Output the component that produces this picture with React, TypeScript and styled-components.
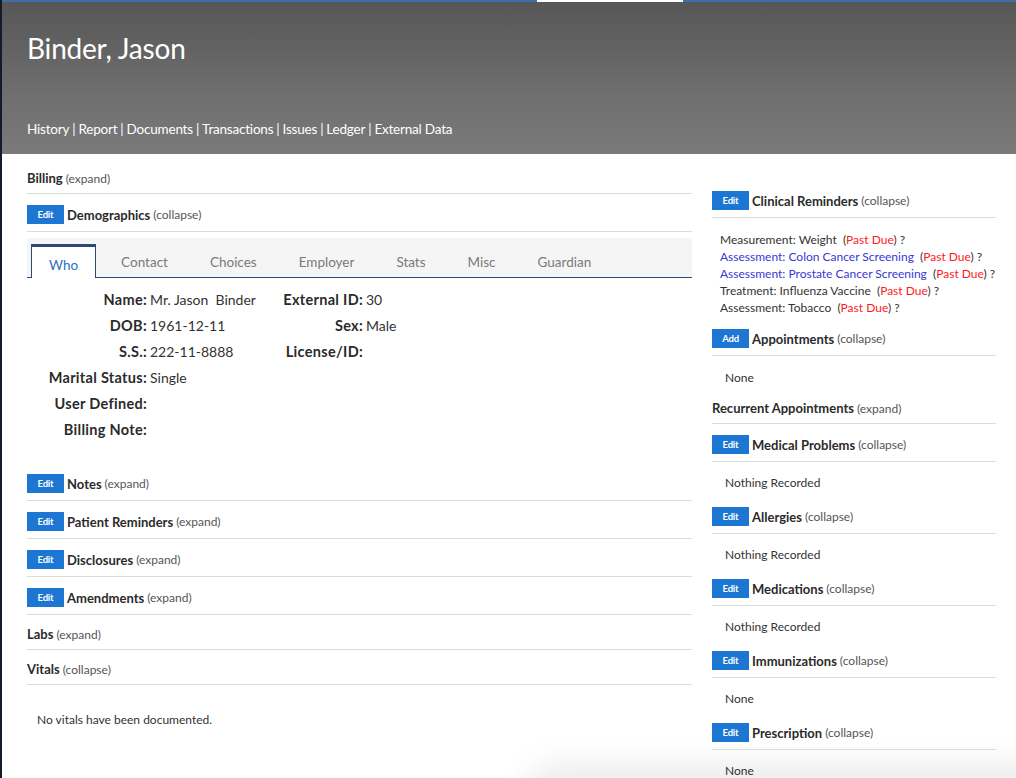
import React from "react";
import styled, { createGlobalStyle } from "styled-components";

const Global = createGlobalStyle`
  html, body { margin: 0; padding: 0; background: #fff; }
  body {
    font-family: Lato, "Noto Sans", sans-serif;
    color: #333;
    width: 1016px;
    height: 778px;
    overflow: hidden;
  }
  * { box-sizing: border-box; }
`;

const Page = styled.div`
  position: relative;
  border-left: 2px solid #141b2b;
  height: 778px;
  overflow: hidden;
`;

const TopStrip = styled.div`
  display: flex;
  height: 2px;
  position: absolute;
  top: 0;
  left: 0;
  right: 0;
`;

const StripSeg = styled.div<{ $w: number; $c: string }>`
  width: ${(p) => p.$w}px;
  flex: ${(p) => (p.$w === 0 ? 1 : "none")};
  background: ${(p) => p.$c};
`;

const Header = styled.header`
  height: 154px;
  background: linear-gradient(to bottom, #565656 0%, #6e6e6e 60%, #7a7a7a 100%);
  padding: 30px 25px 0;
  display: flex;
  flex-direction: column;
`;

const Title = styled.h1`
  margin: 0;
  font-family: Lato, sans-serif;
  font-weight: 400;
  font-size: 28px;
  line-height: 36px;
  color: #fff;
  letter-spacing: -0.2px;
`;

const Nav = styled.nav`
  margin-top: 54px;
  display: flex;
  color: #fff;
  font-size: 13.5px;
  letter-spacing: -0.2px;
  line-height: 18px;
`;

const NavLink = styled.span`
  color: #fff;
`;

const NavSep = styled.span`
  padding: 0 3px;
`;

const Body = styled.div`
  display: flex;
  gap: 20px;
  padding: 5px 20px 0 25px;
`;

const LeftCol = styled.div`
  width: 665px;
  display: flex;
  flex-direction: column;
`;

const RightCol = styled.div`
  width: 284px;
  padding-top: 21px;
  display: flex;
  flex-direction: column;
`;

const SectionRow = styled.div`
  display: flex;
  align-items: center;
  gap: 3px;
  padding: 11px 0 7px;
  border-bottom: 1px solid #dcdcdc;
  min-height: 34px;
`;

const EditButton = styled.span`
  display: inline-flex;
  align-items: center;
  justify-content: center;
  width: 37px;
  height: 19px;
  background: #1d77d2;
  color: #fff;
  font-size: 9.5px;
  font-weight: 700;
  letter-spacing: -0.2px;
`;

const SectionTitle = styled.span`
  font-size: 13px;
  font-weight: 700;
  color: #2b2b2b;
  line-height: 16px;
`;

const Toggle = styled.span`
  font-size: 12px;
  font-weight: 400;
  color: #555;
`;

const Tabs = styled.div`
  margin-top: 6px;
  height: 40px;
  background: #f5f5f5;
  display: flex;
  align-items: flex-end;
  padding-left: 4px;
  border-bottom: 1px solid #2b4a78;
`;

const Tab = styled.div<{ $active?: boolean }>`
  height: ${(p) => (p.$active ? "34px" : "30px")};
  display: flex;
  align-items: center;
  justify-content: center;
  padding: ${(p) => (p.$active ? "4px 17px 0" : "0 17px")};
  margin-right: 8px;
  font-size: 13.5px;
  color: ${(p) => (p.$active ? "#2c6fbd" : "#7a7a7a")};
  background: ${(p) => (p.$active ? "#fff" : "transparent")};
  border: ${(p) => (p.$active ? "1px solid #2b4a78" : "none")};
  border-top: ${(p) => (p.$active ? "3px solid #2b4a78" : "none")};
  border-bottom: none;
  margin-bottom: ${(p) => (p.$active ? "-1px" : "0")};
`;

const FieldGrid = styled.div`
  display: grid;
  grid-template-columns: 120px 130px 80px auto;
  grid-auto-rows: 26px;
  column-gap: 3px;
  padding: 8px 0 21px 0;
  align-items: center;
  font-size: 14px;
  width: 420px;
`;

const FieldLabel = styled.div`
  font-weight: 700;
  font-size: 14.5px;
  letter-spacing: 0.3px;
  text-align: right;
  color: #2b2b2b;
  white-space: nowrap;
`;

const FieldValue = styled.div`
  color: #333;
  white-space: pre;
`;

const Empty = styled.div``;

const NoteBlock = styled.div<{ $pt: number; $pb: number; $pl: number }>`
  padding: ${(p) => `${p.$pt}px 0 ${p.$pb}px ${p.$pl}px`};
  font-size: 12px;
  line-height: 16px;
  color: #333;
`;

const ReminderList = styled.div`
  padding: 13px 0 2px 8px;
  font-size: 12px;
  line-height: 17px;
  display: flex;
  flex-direction: column;
`;

const Reminder = styled.div<{ $link?: boolean }>`
  color: ${(p) => (p.$link ? "#3838d6" : "#333")};
  white-space: pre;
`;

const Plain = styled.span`
  color: #333;
`;

const PastDue = styled.span`
  color: #ff1a1a;
`;

const Shade = styled.div`
  position: absolute;
  left: 520px;
  top: 762px;
  width: 600px;
  height: 90px;
  border-radius: 40px;
  background: rgba(0, 0, 0, 0.07);
  filter: blur(14px);
  pointer-events: none;
`;

const Section = ({ btn, title, toggle }: { btn?: string; title: string; toggle: string }) => (
  <SectionRow>
    {btn && <EditButton>{btn}</EditButton>}
    <SectionTitle>{title}</SectionTitle>
    <Toggle>({toggle})</Toggle>
  </SectionRow>
);

const navItems = ["History", "Report", "Documents", "Transactions", "Issues", "Ledger", "External Data"];
const tabs = ["Who", "Contact", "Choices", "Employer", "Stats", "Misc", "Guardian"];

const reminders: { text: string; link?: boolean }[] = [
  { text: "Measurement: Weight" },
  { text: "Assessment: Colon Cancer Screening", link: true },
  { text: "Assessment: Prostate Cancer Screening", link: true },
  { text: "Treatment: Influenza Vaccine" },
  { text: "Assessment: Tobacco" },
];

export default function App() {
  return (
    <>
      <Global />
      <Page>
        <TopStrip>
          <StripSeg $w={535} $c="#3f6ea8" />
          <StripSeg $w={146} $c="#ffffff" />
          <StripSeg $w={0} $c="#3f6ea8" />
        </TopStrip>
        <Header>
          <Title>Binder, Jason</Title>
          <Nav>
            {navItems.map((n, i) => (
              <React.Fragment key={n}>
                {i > 0 && <NavSep>|</NavSep>}
                <NavLink>{n}</NavLink>
              </React.Fragment>
            ))}
          </Nav>
        </Header>
        <Body>
          <LeftCol>
            <Section title="Billing" toggle="expand" />
            <Section btn="Edit" title="Demographics" toggle="collapse" />
            <Tabs>
              {tabs.map((t, i) => (
                <Tab key={t} $active={i === 0}>
                  {t}
                </Tab>
              ))}
            </Tabs>
            <FieldGrid>
              <FieldLabel>Name:</FieldLabel>
              <FieldValue>{"Mr. Jason  Binder"}</FieldValue>
              <FieldLabel>External ID:</FieldLabel>
              <FieldValue>30</FieldValue>
              <FieldLabel>DOB:</FieldLabel>
              <FieldValue>1961-12-11</FieldValue>
              <FieldLabel>Sex:</FieldLabel>
              <FieldValue>Male</FieldValue>
              <FieldLabel>S.S.:</FieldLabel>
              <FieldValue>222-11-8888</FieldValue>
              <FieldLabel>License/ID:</FieldLabel>
              <FieldValue />
              <FieldLabel>Marital Status:</FieldLabel>
              <FieldValue>Single</FieldValue>
              <Empty />
              <Empty />
              <FieldLabel>User Defined:</FieldLabel>
              <FieldValue />
              <Empty />
              <Empty />
              <FieldLabel>Billing Note:</FieldLabel>
              <FieldValue />
              <Empty />
              <Empty />
            </FieldGrid>
            <Section btn="Edit" title="Notes" toggle="expand" />
            <Section btn="Edit" title="Patient Reminders" toggle="expand" />
            <Section btn="Edit" title="Disclosures" toggle="expand" />
            <Section btn="Edit" title="Amendments" toggle="expand" />
            <Section title="Labs" toggle="expand" />
            <Section title="Vitals" toggle="collapse" />
            <NoteBlock $pt={27} $pb={0} $pl={10}>No vitals have been documented.</NoteBlock>
          </LeftCol>
          <RightCol>
            <Section btn="Edit" title="Clinical Reminders" toggle="collapse" />
            <ReminderList>
              {reminders.map((r) => (
                <Reminder key={r.text} $link={r.link}>
                  {r.text}
                  <Plain>{"  ("}</Plain>
                  <PastDue>Past Due</PastDue>
                  <Plain>{") ?"}</Plain>
                </Reminder>
              ))}
            </ReminderList>
            <Section btn="Add" title="Appointments" toggle="collapse" />
            <NoteBlock $pt={14} $pb={3} $pl={13}>None</NoteBlock>
            <Section title="Recurrent Appointments" toggle="expand" />
            <Section btn="Edit" title="Medical Problems" toggle="collapse" />
            <NoteBlock $pt={13} $pb={5} $pl={13}>Nothing Recorded</NoteBlock>
            <Section btn="Edit" title="Allergies" toggle="collapse" />
            <NoteBlock $pt={13} $pb={5} $pl={13}>Nothing Recorded</NoteBlock>
            <Section btn="Edit" title="Medications" toggle="collapse" />
            <NoteBlock $pt={13} $pb={5} $pl={13}>Nothing Recorded</NoteBlock>
            <Section btn="Edit" title="Immunizations" toggle="collapse" />
            <NoteBlock $pt={13} $pb={5} $pl={13}>None</NoteBlock>
            <Section btn="Edit" title="Prescription" toggle="collapse" />
            <NoteBlock $pt={13} $pb={5} $pl={13}>None</NoteBlock>
          </RightCol>
        </Body>
        <Shade />
      </Page>
    </>
  );
}
